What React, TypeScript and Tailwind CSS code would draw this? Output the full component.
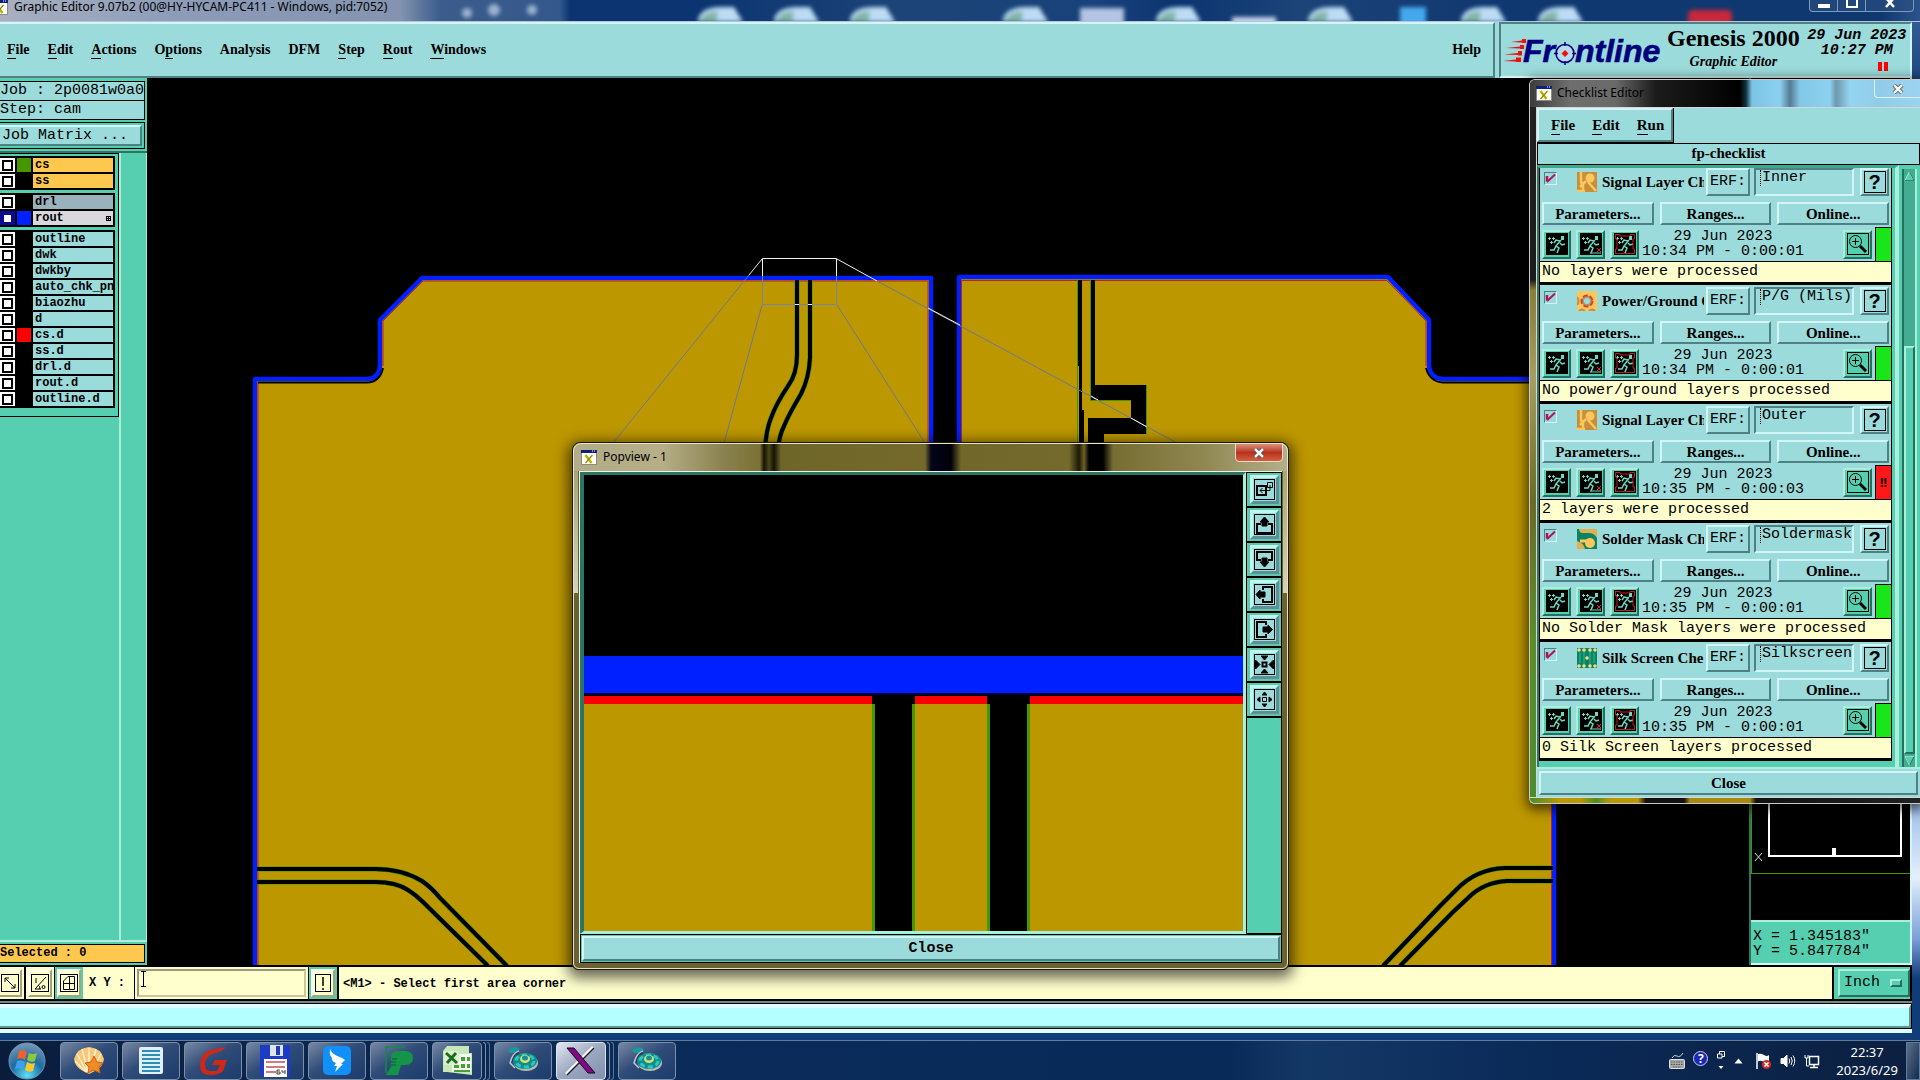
import type { ReactNode } from "react";
import clsx from "clsx";

const MONO = "font-['Liberation_Mono',monospace]";
const SERIF = "font-['Liberation_Serif',serif]";
const UI = "font-['Noto_Sans',sans-serif]";

// Motif bevels
const RAISED = "border-2 border-t-[#d4f5f5] border-l-[#d4f5f5] border-r-[#4f8083] border-b-[#4f8083]";
const SUNKEN = "border-2 border-t-[#4f8083] border-l-[#4f8083] border-r-[#d4f5f5] border-b-[#d4f5f5]";
const TEAL_RAISED = "border-2 border-t-[#a9efdc] border-l-[#a9efdc] border-r-[#23705c] border-b-[#23705c]";
const CREAM_RAISED = "border-2 border-t-[#fffff0] border-l-[#fffff0] border-r-[#a3a37e] border-b-[#a3a37e]";

type Layer = { name: string; color?: string; tone?: "orange" | "gray" | "light"; active?: boolean };

const layerGroups: Layer[][] = [
  [
    { name: "cs", color: "bg-[#459700]", tone: "orange" },
    { name: "ss", tone: "orange" },
  ],
  [
    { name: "drl", tone: "gray" },
    { name: "rout", color: "bg-[#0020ff]", tone: "light", active: true },
  ],
  [
    { name: "outline" },
    { name: "dwk" },
    { name: "dwkby" },
    { name: "auto_chk_pnl" },
    { name: "biaozhu" },
    { name: "d" },
    { name: "cs.d", color: "bg-[#ff0000]" },
    { name: "ss.d" },
    { name: "drl.d" },
    { name: "rout.d" },
    { name: "outline.d" },
  ],
];

const tones = {
  orange: "bg-[#fec74e]",
  gray: "bg-[#9ab2bc]",
  light: "bg-[#d9d9dd]",
};

// [text, index of the mnemonic letter, -1 for none]
const menus: [string, number][] = [
  ["File", 0],
  ["Edit", 0],
  ["Actions", 0],
  ["Options", 1],
  ["Analysis", -1],
  ["DFM", -1],
  ["Step", 0],
  ["Rout", 0],
  ["Windows", 0],
];

type Check = {
  title: string;
  icon: "signal" | "power" | "solder" | "silk";
  erf: string;
  time: string;
  status: string;
  failed?: boolean;
};

const checks: Check[] = [
  { title: "Signal Layer Ch", icon: "signal", erf: "Inner", time: "10:34 PM - 0:00:01", status: "No layers were processed" },
  { title: "Power/Ground C", icon: "power", erf: "P/G (Mils)", time: "10:34 PM - 0:00:01", status: "No power/ground layers processed" },
  { title: "Signal Layer Ch", icon: "signal", erf: "Outer", time: "10:35 PM - 0:00:03", status: "2 layers were processed", failed: true },
  { title: "Solder Mask Ch", icon: "solder", erf: "Soldermask", time: "10:35 PM - 0:00:01", status: "No Solder Mask layers were processed" },
  { title: "Silk Screen Che", icon: "silk", erf: "Silkscreen", time: "10:35 PM - 0:00:01", status: "0 Silk Screen layers processed" },
];

function Mnemonic({ text, at }: { text: string; at: number }) {
  if (at < 0) return <>{text}</>;
  return (
    <>
      {text.slice(0, at)}
      <span className="border-b border-black pb-px">{text[at]}</span>
      {text.slice(at + 1)}
    </>
  );
}

function XIcon() {
  return (
    <svg width="16" height="15" viewBox="0 0 16 15" className="shrink-0">
      <rect x="0.5" y="0.5" width="15" height="14" fill="#fffff4" stroke="#8a8a8a" />
      <rect x="0" y="0" width="16" height="3" fill="#10207a" />
      <path d="M11 1h1M13 1h1" stroke="#fff" />
      <path d="M4.5 5 L10.5 13" stroke="#b8b000" strokeWidth="2.4" />
      <path d="M11.5 5 L4.5 13" stroke="#8c8800" strokeWidth="1.2" />
    </svg>
  );
}

function FrontlineLogo() {
  return (
    <svg width="162" height="34" viewBox="0 0 162 34" aria-label="Frontline" className="overflow-visible">
      <g fill="#f01010">
        <path d="M8 6 L19 4.500 V3 H23 V7 H19 V6.500Z" />
        <path d="M3 12 L17 10.500 V9 H21 V13 H17 V12.500Z" />
        <path d="M1 18.500 L15 17 V15 H19 V19.500 H15 V19Z" />
        <path d="M0 25 L13 23.500 V21.500 H18 V26 H13 V25.500Z" />
      </g>
      <g
        fill="#00007c"
        stroke="#00007c"
        strokeWidth="0.600"
        fontFamily="'Liberation Sans', sans-serif"
        fontSize="32"
        fontWeight="bold"
        fontStyle="italic"
      >
        <text x="20" y="26">Fr</text>
        <text x="72" y="26">ntline</text>
      </g>
      <circle cx="62" cy="17.500" r="9" fill="#b4dcec" stroke="#00007c" strokeWidth="1.500" />
      <path d="M62 6v4M62 25v4M51 17.500h4M69 17.500h4" stroke="#00007c" strokeWidth="1.500" />
      <path d="M62 14 L65.500 17.500 L62 21 L58.500 17.500Z" fill="#f01010" />
    </svg>
  );
}

function MenuBar() {
  return (
    <header className={clsx("flex h-14 shrink-0 bg-[#9cdbdb] text-sm font-bold text-black", SERIF)}>
      <nav className={clsx("mr-1 flex flex-1 items-center justify-between border-l-0", RAISED)}>
        <div className="flex items-center gap-4 pl-1.5">
          {menus.map(([text, at]) => (
            <button key={text} className="px-px leading-4">
              <Mnemonic text={text} at={at} />
            </button>
          ))}
        </div>
        <button className="pr-3">Help</button>
      </nav>
      <div className={clsx("flex w-[413px] items-start pl-0.5", SUNKEN)}>
        <div className="pt-3">
          <FrontlineLogo />
        </div>
        <div className="ml-0.5 flex flex-col items-center">
          <h1 className="text-2xl leading-7 whitespace-nowrap">Genesis 2000</h1>
          <span className="text-sm italic">Graphic Editor</span>
        </div>
        <div className={clsx("flex flex-1 flex-col items-center pt-1 pl-1 text-[15px] leading-[15px] italic", MONO)}>
          <span className="whitespace-nowrap">29 Jun 2023</span>
          <span>10:27 PM</span>
          <span className="mt-1 flex gap-0.5 self-end pr-[22px]">
            <i className="h-[9px] w-1 bg-[#ff0000]" />
            <i className="h-[9px] w-1 bg-[#ff0000]" />
          </span>
        </div>
      </div>
    </header>
  );
}

function LayerRow({ layer }: { layer: Layer }) {
  return (
    <div className="flex h-3.5 gap-0.5">
      <label className={clsx("flex w-[15px] items-center justify-center", layer.active ? "bg-[#0a0a96]" : "bg-white")}>
        <input
          type="checkbox"
          aria-label={layer.name}
          className={clsx("size-[11px] appearance-none bg-white", layer.active ? "border-2 border-[#0a0a96]" : "border-2 border-black")}
        />
      </label>
      <span className={clsx("w-3.5", layer.color ?? "bg-black")} />
      <button
        className={clsx(
          "flex flex-1 items-center justify-between overflow-hidden pl-0.5 text-left text-xs leading-[14px] font-bold",
          layer.tone ? tones[layer.tone] : "bg-[#9cdbdb]",
        )}
      >
        {layer.name}
        {layer.active && (
          <svg width="5" height="5" viewBox="0 0 5 5" className="mr-0.5">
            <path d="M0 .5h5M0 2.500h5M0 4.500h5M.5 0v5M2.500 0v5M4.500 0v5" stroke="#000" />
          </svg>
        )}
      </button>
    </div>
  );
}

function Sidebar() {
  return (
    <aside className={clsx("flex w-[147px] shrink-0 flex-col bg-[#55cfb0] pt-[3px] text-black", MONO)}>
      <div className="mr-0.5 border border-l-0 border-black bg-[#9cdbdb] text-[15px] leading-[18px] whitespace-nowrap">
        Job : 2p0081w0a0
      </div>
      <div className="mr-0.5 border border-t-0 border-l-0 border-black bg-[#9cdbdb] text-[15px] leading-[18px]">Step: cam</div>
      <div className="mt-0.5 mr-0.5 border border-l-0 border-black py-0.5 pr-0.5">
        <button className={clsx("block w-full border-l-0 bg-[#9cdbdb] pl-0.5 text-left text-[15px] leading-[17px]", RAISED)}>
          Job Matrix ...
        </button>
      </div>
      <div className="mt-0.5 flex flex-1 border-t-2 border-[#2c7464]">
        <div className="w-[119px]">
          <div className="flex flex-col gap-[3px] border-t border-r border-black pt-0.5 pr-[3px] pb-2">
            {layerGroups.map((group, i) => (
              <div key={i} className="flex flex-col gap-0.5 bg-black py-0.5 pr-0.5">
                {group.map((layer) => (
                  <LayerRow key={layer.name} layer={layer} />
                ))}
              </div>
            ))}
          </div>
          <div className="border-t border-black" />
        </div>
        <div className="flex-1 border-r border-l-2 border-[#a9efdc]" />
      </div>
      <div className="border-t-2 border-[#a9efdc] pt-0.5 pr-0.5 pb-0.5">
        <div className="border border-l-0 border-black bg-[#fec74e] text-xs leading-[17px] font-bold">Selected : 0</div>
      </div>
    </aside>
  );
}

const leftBoard = "M255 966 V379 H366 Q380 379 380 364 V320 L422 278 H931 V966";
const rightBoard = "M959 966 V277 H1388 L1429 320 V364 Q1429 378 1443 379 H1554 V966";

const traces = [
  "M797 280 V355 Q797 374 788 386 Q776 404 771 418 Q766 430 765 450",
  "M810 280 V358 Q809 378 801 394 Q789 414 784 426 Q779 436 778 450",
  "M257 869 H375 Q402 869 422 881 Q432 888 440 898 L507 966",
  "M257 882 H375 Q396 882 408 890 Q416 895 423 902 L488 966",
  "M1553 868 H1505 Q1476 869 1456 890 L1440 906 L1383 966",
  "M1553 881 H1507 Q1484 882 1468 898 L1452 913 L1400 966",
];

function Board() {
  return (
    <main className="min-w-0 flex-1 overflow-hidden bg-black">
      <svg className="block h-full w-full" viewBox="147 78 1602 887" preserveAspectRatio="xMinYMin slice">
        <g fill="#bd9700" stroke="#0020ff" strokeWidth="4.500" strokeLinejoin="round">
          <path d={leftBoard} />
          <path d={rightBoard} />
        </g>
        <g fill="none" stroke="#c02020" strokeWidth="1">
          <path d="M258 966 V382 M383 366 V321 L423 281 H928 V966" />
          <path d="M961.500 966 V280.500 H1387 L1426 321 V366 M1551.500 382 V966" />
        </g>
        <g fill="none">
          <path d="M258 382.500 H367 Q380 382 383 368" stroke="#000" strokeWidth="2" />
          <path d="M1551 382.500 H1443 Q1430 382 1426 368" stroke="#000" strokeWidth="2" />
        </g>
        <g fill="none">
          {traces.map((d) => (
            <g key={d}>
              <path d={d} stroke="#459700" strokeWidth="5" />
              <path d={d} stroke="#000" strokeWidth="4" />
            </g>
          ))}
        </g>
        <g shapeRendering="crispEdges">
          <path d="M1078 280 H1082 V410 H1084 V450 H1079Z" />
          <path d="M1091 280 H1095 V385 H1146 V434 H1104 V450 H1088 V418 H1131 V400 H1091Z" />
          <path d="M1077.500 280 V450 M1090.500 280 V400.500 H1131 M1146.500 385 V434" fill="none" stroke="#459700" />
        </g>
        {/* zoom guides, lighter where they cross bare background */}
        <g fill="none" strokeWidth="1">
          <path d="M762.500 276 V304.500 H836.500 V276" stroke="#7484ac" />
          <path d="M762.500 276 V258.500 H836.500 V276 M795 304.500 H799 M808 304.500 H812" stroke="#f0f0f0" />
          <path d="M749 275 L613 443 M762 305 L724 443 M837 305 L925 443 M877 281 L1177 443" stroke="#6c7894" />
          <path d="M762 259 L749 275 M837 259 L877 281 M928 308 L960 325 M1091 396 L1098 400 M1131 418 L1147 427" stroke="#f0f0f0" />
        </g>
      </svg>
    </main>
  );
}

function Overview() {
  return (
    <aside className={clsx("flex w-[163px] shrink-0 flex-col border-r-2 border-l-2 border-r-[#d4f5f5] border-l-[#2c7464] bg-black", MONO)}>
      <div className="flex flex-1 items-end">
        <svg width="159" height="200" viewBox="1751 720 159 200" fill="none" shapeRendering="crispEdges">
          <path d="M1751.500 720 V873.500 H1910" stroke="#459700" />
          <path d="M1768.500 720 V856 H1901 V720" stroke="#fff" strokeWidth="2" />
          <path d="M1834 848 V857" stroke="#fff" strokeWidth="4" />
          <path d="M1755 853 L1762 861 M1762 853 L1755 861" stroke="#ddd" shapeRendering="auto" />
        </svg>
      </div>
      <div className="border-y-2 border-t-[#a9efdc] border-b-[#d4f5f5] bg-[#55cfb0] pt-[7px] pb-1 pl-0.5 text-[15px] leading-[15px] whitespace-pre text-black">
        <div>X = 1.345183"</div>
        <div>Y = 5.847784"</div>
      </div>
    </aside>
  );
}

function CreamButton({ label, teal, children }: { label: string; teal?: boolean; children: ReactNode }) {
  return (
    <button
      aria-label={label}
      className={clsx("flex h-8 w-7 shrink-0 items-center justify-center", teal ? "bg-[#55cfb0]" : "bg-[#ffffce]")}
    >
      <span className={clsx("flex h-7 w-6 items-center justify-center bg-[#ffffce]", CREAM_RAISED)}>
        <svg width="18" height="20" viewBox="0 0 18 20" fill="none" stroke="#000">
          {children}
        </svg>
      </span>
    </button>
  );
}

function CommandBar() {
  return (
    <div className={clsx("flex h-9 shrink-0 border-y-2 border-black bg-[#ffffce] text-xs font-bold text-black", MONO)}>
      <div className="flex items-center">
        <div className="-ml-1 flex items-center border-r border-black">
          <CreamButton label="Snap mode">
            <rect x="0.500" y="1.500" width="17" height="17" />
            <path d="M4 5 L14 15 M4 9 V5 H8 M10 15 H14 V11" />
          </CreamButton>
          <span className="h-8 w-0.5 bg-black" />
          <CreamButton label="Angle">
            <rect x="0.500" y="1.500" width="17" height="17" />
            <path d="M15 4 L4 16 H10 M5 5 V10 M7 12 Q9 13 9 16" />
            <circle cx="12.500" cy="14" r="1.500" />
          </CreamButton>
        </div>
        <CreamButton label="Grid" teal>
          <rect x="0.500" y="1.500" width="17" height="17" />
          <path d="M3.500 16.500 V8 L8 3.500 H14.500 V16.500Z M9.500 3.500 V16.500 M3.500 10.500 H14.500" />
        </CreamButton>
      </div>
      <label htmlFor="xy" className="flex w-[52px] shrink-0 items-center border-r border-black pl-1.5 whitespace-pre">
        X Y :
      </label>
      <div className="flex w-[174px] shrink-0 items-center border-r border-black px-0.5">
        <div className="flex h-7 w-full border-2 border-t-[#9a9a7c] border-r-[#c9c9a0] border-b-[#c9c9a0] border-l-[#9a9a7c] pl-0.5">
          <svg width="5" height="16" viewBox="0 0 5 16" className="shrink-0" stroke="#000">
            <path d="M0 .5h5M0 15.500h5M2.500 0v16" />
          </svg>
          <input id="xy" className="w-full bg-transparent outline-none" />
        </div>
      </div>
      <CreamButton label="Help on command" teal>
        <rect x="1.500" y="1.500" width="15" height="17" />
        <path d="M9 4 V13 M9 15 V17" strokeWidth="1.500" />
      </CreamButton>
      <p className="flex flex-1 items-center border-l-2 border-black pt-px pl-1 whitespace-nowrap">{"<M1> - Select first area corner"}</p>
      <div className="flex w-20 items-center border-x-2 border-black bg-[#55cfb0] pl-1">
        <div className={clsx("relative flex h-7 flex-1 items-center", TEAL_RAISED)}>
          <select aria-label="Units" className="w-full appearance-none bg-transparent pl-1 text-[15px] font-normal outline-none">
            <option>Inch</option>
            <option>mm</option>
          </select>
          <span className="pointer-events-none absolute right-1.5 h-2 w-3 border-2 border-t-[#a9efdc] border-r-[#23705c] border-b-[#23705c] border-l-[#a9efdc]" />
        </div>
      </div>
    </div>
  );
}

const popIcons: { label: string; body: ReactNode }[] = [
  {
    label: "Area",
    body: (
      <>
        <path d="M3 7h9v9h-9z" strokeWidth="2" />
        <path d="M13.500 3.500h5v5h-5zM16 6v5.500H6M8.500 9L6 11.500L8.500 14" />
      </>
    ),
  },
  {
    label: "Up",
    body: (
      <>
        <path d="M7 10H3v9h15v-9h-4" strokeWidth="2" />
        <path d="M10.500 3L15 8h-2v4h-5V8H6Z" fill="#000" />
      </>
    ),
  },
  {
    label: "Down",
    body: (
      <>
        <path d="M7 11H3V3h15v8h-4" strokeWidth="2" />
        <path d="M10.500 18L15 13h-2V9h-5v4H6Z" fill="#000" />
      </>
    ),
  },
  {
    label: "Left",
    body: (
      <>
        <path d="M9 6V3h9v15H9v-3" strokeWidth="2" />
        <path d="M2 10.500L6 6v2h5v5H6v2Z" fill="#000" />
      </>
    ),
  },
  {
    label: "Right",
    body: (
      <>
        <path d="M12 6V3H3v15h9v-3" strokeWidth="2" />
        <path d="M18.500 10.500L14 6v2H9v5h5v2Z" fill="#000" />
      </>
    ),
  },
  {
    label: "Zoom in",
    body: (
      <>
        <path d="M8.500 8.500h4v4h-4z" strokeWidth="2" />
        <path d="M7 2h7L10.500 6ZM7 19h7L10.500 15ZM1.500 6v9L6 10.500ZM19.500 6v9L15 10.500Z" fill="#000" />
      </>
    ),
  },
  {
    label: "Zoom out",
    body: (
      <>
        <path d="M8.500 8.500h4v4h-4z" />
        <path d="M8 6h5L10.500 3ZM8 15h5L10.500 18ZM6 8v5L3 10.500ZM15 8v5L18 10.500Z" fill="#000" />
      </>
    ),
  },
];

function Popview() {
  return (
    <section className="absolute top-[442px] left-[572px] flex h-[528px] w-[717px] flex-col rounded-t-lg rounded-b-md border border-[#1c1a08] bg-[#6b6230] px-1.5 pb-1.5 shadow-[0_4px_14px_4px_rgba(0,0,0,0.6)]">
      <div className="pointer-events-none absolute inset-0 rounded-t-lg rounded-b-md border border-[#e8e4c8]" />
      <div className="pointer-events-none absolute inset-y-7 left-px h-[122px] w-1 bg-linear-to-b from-[#aaa376] to-[#d5d1ba]" />
      <div className="pointer-events-none absolute inset-y-7 right-px h-[122px] w-1 bg-linear-to-b from-[#aaa376] to-[#d5d1ba]" />
      <div className="-mx-1.5 flex h-7 shrink-0 items-center rounded-t-lg bg-[linear-gradient(90deg,#b2ac88_0,#b5ae86_90px,#8a8250_150px,#7b7134_187px,#141204_191px,#4c4618_196px,#141204_201px,#6e6628_208px,#74692b_352px,#05051c_358px,#000008_378px,#71672a_388px,#736a2c_496px,#1c1a06_506px,#6c6228_511px,#000_516px,#000_530px,#766d32_540px,#8f8750_630px,#b5af8c_100%)] pr-[5px] pl-2">
        <XIcon />
        <h2 className={clsx("pl-1.5 text-xs text-black", UI)}>Popview - 1</h2>
        <button
          aria-label="Close Popview"
          className="z-10 mb-auto ml-auto flex h-[19px] w-12 items-center justify-center rounded-b-sm border border-[#f0d8cc] bg-linear-to-b from-[#d8907c] via-[#b8301c] via-50% to-[#d06040]"
        >
          <CloseGlyph />
        </button>
      </div>
      <div className="flex min-h-0 flex-1 flex-col border-t border-l border-[#e8f4e8] bg-[#55cfb0]">
        <div className="flex min-h-0 flex-1">
          <div className="min-w-0 flex-1 border-t-[3px] border-r-[3px] border-b-[3px] border-l-4 border-t-[#2c7464] border-r-[#a9efdc] border-b-[#a9efdc] border-l-[#2c7464]">
            <svg className="block h-full w-full bg-black" viewBox="0 0 657 456" preserveAspectRatio="none" shapeRendering="crispEdges">
              <rect y="181" width="657" height="37" fill="#0020ff" />
              <rect y="218" width="657" height="2" fill="#000040" />
              <path d="M0 221h287v8h-287zM330 221h72v8h-72zM445 221h212v8h-212z" fill="#ff0000" />
              <path d="M0 229h287v227h-287zM330 229h72v227h-72zM445 229h212v227h-212z" fill="#bd9700" />
              <path d="M287 229h3v227h-3zM327 229h3v227h-3zM402 229h3v227h-3zM442 229h3v227h-3z" fill="#459700" />
            </svg>
          </div>
          <div className="w-9 border border-black">
            {popIcons.map((icon) => (
              <button key={icon.label} aria-label={icon.label} className="flex h-[35px] w-full items-center justify-center border-b-2 border-black bg-[#62c6ad]">
                <span className="flex size-[29px] items-center justify-center border-3 border-t-[#bdf8ee] border-r-[#5d8f98] border-b-[#5d8f98] border-l-[#bdf8ee] bg-[#9cdbdb]">
                  <svg width="21" height="21" viewBox="0 0 21 21" fill="none" stroke="#000">
                    <rect x="0.500" y="0.500" width="20" height="20" />
                    {icon.body}
                  </svg>
                </span>
              </button>
            ))}
          </div>
        </div>
        <div className="border border-black p-px">
          <button className={clsx("block h-[25px] w-full bg-[#9cdbdb] text-[15px] leading-[22px] font-bold text-black", RAISED, MONO)}>
            Close
          </button>
        </div>
      </div>
    </section>
  );
}

function CloseGlyph() {
  return (
    <svg width="12" height="10" viewBox="0 0 12 10">
      <path d="M2 1 L10 9 M10 1 L2 9" stroke="#444" strokeWidth="4" />
      <path d="M2 1 L10 9 M10 1 L2 9" stroke="#f4f4f4" strokeWidth="2.500" />
    </svg>
  );
}

function CheckIcon({ kind }: { kind: Check["icon"] }) {
  return (
    <svg width="20" height="20" viewBox="0 0 20 20" className="shrink-0">
      {kind === "signal" && (
        <>
          <rect width="20" height="20" fill="#c58f3c" />
          <circle cx="13" cy="6" r="4.500" fill="#ffc65c" />
          <path d="M4 0V8Q4 12 6 13V20M9 9L3 15M11 10L19 19M0 19H8" stroke="#ffc65c" strokeWidth="2.500" fill="none" />
        </>
      )}
      {kind === "power" && (
        <>
          <rect width="20" height="20" fill="#ffc65c" />
          <circle cx="10" cy="10" r="5.500" fill="#a89878" stroke="#e04020" strokeWidth="2" strokeDasharray="5 2" />
          <circle cx="10" cy="10" r="3" fill="#9cdbdb" />
          <path d="M0 6Q3 10 0 14M2 20Q5 17 8 20M12 20Q15 17 18 20" stroke="#c58f3c" strokeWidth="2" fill="none" />
        </>
      )}
      {kind === "solder" && (
        <>
          <rect width="20" height="20" fill="#0c8464" />
          <path d="M2 0H20V9Q17 4 12 4H5Q2 3 2 0Z" fill="#e0b050" />
          <path d="M0 12Q7 14 8 20H0Z" fill="#e0b050" />
          <circle cx="13" cy="14" r="5" fill="#ffc65c" />
          <path d="M3 12H11" stroke="#ffc65c" strokeWidth="3" />
        </>
      )}
      {kind === "silk" && (
        <>
          <rect width="20" height="20" fill="#0c8464" />
          <path d="M3 5V15M17 5V15M7 3V17M13 3V17" stroke="#30b890" />
          <g fill="#f4dc84">
            <circle cx="2" cy="2" r="1.800" />
            <circle cx="7" cy="2" r="1.800" />
            <circle cx="13" cy="2" r="1.800" />
            <circle cx="18" cy="2" r="1.800" />
            <circle cx="2" cy="18" r="1.800" />
            <circle cx="7" cy="18" r="1.800" />
            <circle cx="13" cy="18" r="1.800" />
            <circle cx="18" cy="18" r="1.800" />
            <circle cx="10" cy="10" r="1.800" />
          </g>
        </>
      )}
    </svg>
  );
}

function RunButton({ label, variant }: { label: string; variant: "run" | "area" | "profile" }) {
  return (
    <button aria-label={label} className={clsx("flex size-[29px] shrink-0 items-center justify-center bg-[#55cfb0]", TEAL_RAISED)}>
      <svg width="22" height="22" viewBox="0 0 22 22" className="bg-black" fill="none" stroke="#6fd8c0" strokeWidth="1.500">
        <path d="M15 3h3v4h-3z" fill="#6fd8c0" stroke="none" />
        <path d="M15 7L10 13L13 15L11 20M10 13L8 17H4M14 8L10 7L8 10M14 10L16 12L19 11" />
        <path d="M2 5.500h3M3.500 4v3M6 5.500h3M7.500 4v3M4 9.500h3M5.500 8v3" strokeWidth="1" />
        {variant === "area" && (
          <>
            <path d="M10 20H21" strokeWidth="1" />
            <path d="M17 15L21 19M21 15L17 19" stroke="#e02030" strokeWidth="1" />
          </>
        )}
        {variant === "profile" && <path d="M1.500 1.500H6V3H16V1.500H20.500V6H19V16H20.500V20.500H1.500V16H3V6H1.500Z" stroke="#c81820" strokeWidth="1" />}
      </svg>
    </button>
  );
}

function CheckCard({ check, id, first }: { check: Check; id: string; first: boolean }) {
  return (
    <li className="border-x border-b-[3px] border-black bg-[#9cdbdb]">
      <div className={clsx("flex items-stretch pr-0.5 pl-1", first ? "h-7" : "h-[30px] pt-0.5")}>
        <span className="mt-1 grid size-[13px] shrink-0 place-items-center">
          <input
            id={id}
            type="checkbox"
            defaultChecked
            className="peer col-start-1 row-start-1 size-[13px] appearance-none border border-t-[#4f8083] border-r-[#d4f5f5] border-b-[#d4f5f5] border-l-[#4f8083]"
          />
          <svg width="11" height="11" viewBox="0 0 11 11" fill="none" className="pointer-events-none invisible col-start-1 row-start-1 peer-checked:visible">
            <path d="M2 3V8.500" stroke="#b0145c" strokeWidth="2.500" />
            <path d="M2 9L10 1.500" stroke="#b0145c" strokeWidth="2" />
          </svg>
        </span>
        <label htmlFor={id} className={clsx("ml-5 flex w-[127px] shrink-0 items-center gap-[5px] overflow-hidden text-[15px] leading-5 font-bold whitespace-nowrap", SERIF)}>
          <CheckIcon kind={check.icon} />
          {check.title}
        </label>
        <button className={clsx("ml-0.5 w-11 shrink-0 pl-0.5 text-left text-[15px]", RAISED, MONO)}>ERF:</button>
        <div className={clsx("ml-1 flex min-w-0 flex-1 items-start", SUNKEN)}>
          <span className="ml-1 h-4 w-0 shrink-0 border-l border-dotted border-black" />
          <input
            aria-label={`${check.title} ERF`}
            defaultValue={check.erf}
            className={clsx("w-full min-w-0 bg-transparent pl-px text-[15px] leading-4 outline-none", MONO)}
          />
        </div>
        <button aria-label="Help" className={clsx("ml-1.5 flex w-[29px] shrink-0 items-center justify-center", RAISED)}>
          <span className="flex size-[22px] items-center justify-center border border-black font-['Liberation_Sans',sans-serif] text-xl leading-5 font-bold">?</span>
        </button>
      </div>
      <div className={clsx("mt-1.5 flex gap-1.5 pr-0.5 pl-0.5 text-[15px] leading-[18px] font-bold", SERIF)}>
        <button className={clsx("h-[23px] flex-1", RAISED)}>Parameters...</button>
        <button className={clsx("h-[23px] flex-1", RAISED)}>Ranges...</button>
        <button className={clsx("h-[23px] flex-1", RAISED)}>Online...</button>
      </div>
      <div className="mt-0.5 flex h-[34px] items-center gap-[5px] pl-0.5">
        <RunButton label="Run globally" variant="run" />
        <RunButton label="Run on area" variant="area" />
        <RunButton label="Run inside profile" variant="profile" />
        <p className={clsx("-ml-0.5 text-center text-[15px] leading-[15px] whitespace-nowrap", MONO)}>
          29 Jun 2023
          <br />
          {check.time}
        </p>
        <button aria-label="Show results" className={clsx("ml-auto flex size-[29px] shrink-0 items-center justify-center bg-[#55cfb0]", TEAL_RAISED)}>
          <svg width="22" height="22" viewBox="0 0 22 22" fill="none" stroke="#000">
            <rect x="0.500" y="0.500" width="21" height="21" />
            <circle cx="8.500" cy="8.500" r="6" />
            <path d="M8.500 5v7M5 8.500h7" />
            <path d="M13 13L19 19" strokeWidth="3" />
          </svg>
        </button>
        <span
          className={clsx(
            "-ml-0.5 flex h-[34px] w-4 items-center justify-center border-t border-l border-black text-xs font-bold",
            check.failed ? "bg-[#ff1818]" : "bg-[#18e618]",
          )}
        >
          {check.failed && "!!"}
        </span>
      </div>
      <p className={clsx("h-[21px] border-t border-black bg-[#ffffce] pl-0.5 text-[15px] leading-5 whitespace-nowrap", MONO)}>{check.status}</p>
    </li>
  );
}

function ChecklistEditor() {
  return (
    <section className="absolute top-[79px] right-0 flex h-[725px] w-[391px] flex-col overflow-hidden rounded-tl-md rounded-bl-md border border-r-0 border-[#c8ccc8] bg-[linear-gradient(180deg,#222_0,#1c1c1c_200px,#8a7c38_210px,#a89c60_300px,#6b6a28_420px,#5c8c2c_560px,#4c8c2c_100%)] pl-1.5 text-black shadow-[0_3px_12px_3px_rgba(0,0,0,0.6)]">
      <div className="-ml-1.5 flex h-[27px] shrink-0 items-start bg-[linear-gradient(90deg,#3c3c3c_0,#6e6e6e_40px,#6a6a6a_85px,#1c1c1c_125px,#000_210px,#103440_216px,#7cc4e4_222px,#8cd0f0_250px,#547c94_260px,#84c8e8_270px,#8cd0f0_300px,#6c98ac_306px,#94d4f0_320px,#90cce8_350px,#9cd4f0_100%)] pl-1.5">
        <div className="flex h-[26px] items-center">
          <XIcon />
          <h2 className={clsx("pl-[5px] text-xs", UI)}>Checklist Editor</h2>
        </div>
        <button aria-label="Close Checklist Editor" className="ml-auto flex h-[18px] w-[46px] items-center justify-center rounded-bl-sm border border-t-0 border-r-0 border-[#e0f0f8]">
          <CloseGlyph />
        </button>
      </div>
      <div className="flex min-h-0 flex-1 flex-col border-t border-l border-[#d0d8d8] bg-[#9cdbdb]">
        <div className={clsx("w-[137px] border-r border-b border-black text-[15px] font-bold", SERIF)}>
          <div className={clsx("flex h-[34px] items-center gap-[17px] pl-3", RAISED)}>
            {["File", "Edit", "Run"].map((m) => (
              <button key={m} className="leading-4">
                <Mnemonic text={m} at={0} />
              </button>
            ))}
          </div>
        </div>
        <h3 className={clsx("h-[22px] border border-black text-center text-[15px] leading-[19px] font-bold", SERIF)}>fp-checklist</h3>
        <div className="flex min-h-0 flex-1 bg-[#55cfb0]">
          <div className="w-[363px] border-t-[3px] border-r-4 border-l-2 border-t-[#3ba98d] border-r-[#a9efdc] border-l-[#2c7464]">
            <ul className="mr-[3px]">
              {checks.map((check, i) => (
                <CheckCard key={i} check={check} id={`check-${i}`} first={i === 0} />
              ))}
            </ul>
          </div>
          <div className="flex flex-1 flex-col px-[3px] pt-1">
            <div className="flex min-h-0 flex-1 flex-col items-center border-x-2 border-l-[#23705c] border-r-[#a9efdc] bg-[#45ac94]">
              <button aria-label="Scroll up" className="h-[13px]">
                <svg width="11" height="12" viewBox="0 0 12 12">
                  <path d="M6 1L11 11H1Z" fill="#55cfb0" stroke="#a9efdc" />
                  <path d="M6 1L11 11H1" fill="none" stroke="#23705c" />
                </svg>
              </button>
              <div className="h-[164px]" />
              <div className={clsx("min-h-0 w-full flex-1 bg-[#55cfb0]", TEAL_RAISED)} />
              <button aria-label="Scroll down" className="h-[13px]">
                <svg width="11" height="12" viewBox="0 0 12 12">
                  <path d="M6 11L11 1H1Z" fill="#55cfb0" stroke="#23705c" />
                  <path d="M6 11L1 1H11" fill="none" stroke="#a9efdc" />
                </svg>
              </button>
            </div>
          </div>
        </div>
        <div className="border-t-2 border-[#a9efdc] p-0.5">
          <button className={clsx("block h-6 w-full bg-[#9cdbdb] text-[15px] leading-5 font-bold", RAISED, SERIF)}>Close</button>
        </div>
      </div>
      <div className="-ml-1.5 h-1.5 shrink-0 border-t border-[#d0d8d8] bg-[linear-gradient(90deg,#4c8c2c_0,#bd9700_30px,#bd9700_50px,#4c8c2c_66px,#bd9700_80px,#bd9700_108px,#111_116px,#111_154px,#a88a10_160px,#a88a10_220px,#111_226px,#222_100%)]" />
    </section>
  );
}

const taskIcons: { label: string; active?: boolean; stacked?: boolean; icon: ReactNode }[] = [
  {
    label: "Shell",
    icon: (
      <>
        <path d="M16 29L10 26Q2 22 1 14Q4 3 16 2Q28 3 31 14Q30 22 22 26Z" fill="#f7c878" />
        <path d="M16 28V3M15 27L9 4M17 27L23 4M14 27L4 9M18 27L28 9M13 27L2 16" stroke="#fff0c8" strokeWidth="1.500" />
        <path d="M21 11L24 17L30 18L26 22L27 28L21 25L15 28L16 22L12 18L18 17Z" fill="#f08a24" stroke="#c8601c" />
      </>
    ),
  },
  {
    label: "Documents",
    icon: (
      <>
        <rect x="4" y="2" width="24" height="27" rx="2" fill="#dff0f8" />
        <path d="M7 6H25M7 10H25M7 14H25M7 18H25M7 22H25M7 26H25" stroke="#2c8cb4" strokeWidth="1.800" />
      </>
    ),
  },
  {
    label: "G",
    icon: <path d="M29 2Q25 7 15 9Q8 12 8 20Q8 26 14 26H20L23 20H15L18 15H30L26 26Q22 30 14 30Q3 30 3 21Q3 9 13 5Q20 4 29 2Z" fill="#d02818" />,
  },
  {
    label: "Save",
    icon: (
      <>
        <path d="M1 0H31V32H4L1 29Z" fill="#1c3cc4" />
        <rect x="11" y="0" width="13" height="11" fill="#e0e4ec" />
        <rect x="17" y="1" width="4" height="9" fill="#1c3cc4" />
        <rect x="5" y="14" width="23" height="18" fill="#fff" />
        <path d="M7 17H26M7 22H26M7 27H17" stroke="#c05050" strokeWidth="1.500" />
        <path d="M21 25H18V29H21V27H18M23 25V27H26M26 25V29" stroke="#444" fill="none" />
      </>
    ),
  },
  {
    label: "DingTalk",
    icon: (
      <>
        <rect x="2" y="1" width="28" height="29" rx="5" fill="#1090f8" />
        <path d="M9 4Q10 9 21 13L24 15L20 19H22L14 27L16 21H13L15 18Q10 16 11 13Q8 10 9 4Z" fill="#fff" />
      </>
    ),
  },
  {
    label: "P",
    icon: (
      <>
        <path d="M3 28V2H22" stroke="#148c44" strokeWidth="1.500" fill="none" />
        <path d="M8 12Q8 6 15 6H22Q30 6 30 13Q30 20 22 20H18L15 30H3L8 22Z" fill="#149448" />
        <path d="M9 14H14M8 17H13M8 20H13" stroke="#0c5a34" />
      </>
    ),
  },
  {
    label: "Excel",
    stacked: true,
    icon: (
      <>
        <path d="M6 1H28V8H31V30L6 27H2V6Z" fill="#c8e8b8" />
        <rect x="11" y="9" width="19" height="18" fill="#f4fcf0" />
        <path d="M13 19H18V23H13ZM20 19H24V23H20ZM20 12H24V16H20ZM26 12H29V16H26ZM26 19H29V23H26ZM13 25H29V27H13Z" fill="#4c9c3c" />
        <rect x="3" y="6" width="15" height="14" fill="#d8f0cc" />
        <path d="M5 8L16 18M15 8L6 18" stroke="#1c6c24" strokeWidth="3" />
      </>
    ),
  },
  { label: "Genesis tools", icon: <DiscIcon /> },
  {
    label: "X server",
    active: true,
    stacked: true,
    icon: (
      <>
        <path d="M28 2L1 29" stroke="#f4f4f4" strokeWidth="3" />
        <path d="M29 3L2 30" stroke="#222" strokeWidth="1.500" />
        <path d="M2 3H9L30 28H23Z" fill="#800c84" stroke="#1c041c" />
      </>
    ),
  },
  { label: "Genesis", icon: <DiscIcon /> },
];

function DiscIcon() {
  return (
    <>
      <path d="M1 5Q7 0 13 4L9 8H3Z" fill="#149c9c" />
      <path d="M12 6Q5 9 3 18L8 23" stroke="#c4c4d4" strokeWidth="1.500" fill="none" />
      <path d="M12 8Q7 10 6 17" stroke="#383450" strokeWidth="2.500" fill="none" />
      <ellipse cx="19" cy="18" rx="12" ry="8" fill="#b4bcb0" />
      <ellipse cx="18" cy="16" rx="12" ry="8" fill="#108c90" />
      <ellipse cx="18" cy="16" rx="9" ry="6" fill="none" stroke="#2cc8bc" strokeDasharray="5 3" strokeWidth="3" />
      <ellipse cx="18" cy="14" rx="5" ry="4" fill="#d8e06c" />
      <ellipse cx="18" cy="13" rx="3" ry="2.500" fill="#14909c" />
    </>
  );
}

function StartOrb() {
  return (
    <svg width="40" height="38" viewBox="0 0 40 38">
      <defs>
        <radialGradient id="orb" cx="0.500" cy="0.900" r="0.900">
          <stop offset="0" stopColor="#5ce0f8" />
          <stop offset="0.500" stopColor="#1c6ca4" />
          <stop offset="1" stopColor="#7c98b4" />
        </radialGradient>
      </defs>
      <circle cx="20" cy="19" r="18" fill="url(#orb)" stroke="#6c94b4" />
      <path d="M12 9Q16 7 20 10L18 18Q14 15 10 17Z" fill="#f0602c" />
      <path d="M22 11Q26 13 30 11L28 19Q24 21 20 18Z" fill="#8cc83c" />
      <path d="M10 19Q14 17 18 20L16 28Q12 25 8 27Z" fill="#3ca0ec" />
      <path d="M20 20Q24 23 28 21L26 29Q22 31 18 28Z" fill="#fcc82c" />
    </svg>
  );
}

function Taskbar() {
  return (
    <footer className={clsx("flex h-10 shrink-0 items-center border-t border-[#5c7c9c] bg-[linear-gradient(90deg,#0a1c3c_0,#0c2448_12%,#0b2c5a_36%,#082a58_64%,#143866_68%,#0a2a58_80%,#0c2040_100%)] text-white", UI)}>
      <button aria-label="Start" className="ml-[7px]">
        <StartOrb />
      </button>
      <div className="ml-[13px] flex gap-1">
        {taskIcons.map((t) => (
          <div key={t.label} className="flex w-[58px] gap-px">
            <button
              aria-label={t.label}
              className={clsx(
                "flex h-[38px] flex-1 items-center justify-center rounded-sm border",
                t.active
                  ? "border-[#dce4f0] bg-linear-to-br from-[#e4e8f0] via-[#9ca8c0] to-[#8090b0]"
                  : "border-[#7c90ac] bg-linear-to-br from-[#7888a4] via-[#304c78] via-45% to-[#1c3c6c]",
              )}
            >
              <svg width="32" height="32" viewBox="0 0 32 32" fill="none">
                {t.icon}
              </svg>
            </button>
            {t.stacked && (
              <>
                <i className="w-[3px] rounded-r-sm border-y border-r border-[#7c90ac]" />
                <i className="w-[3px] rounded-r-sm border-y border-r border-[#5c7498]" />
              </>
            )}
          </div>
        ))}
      </div>
      <div className="ml-auto flex items-center gap-2">
        <svg width="16" height="18" viewBox="0 0 16 18" fill="none">
          <path d="M3 6Q5 2 8 4T14 1" stroke="#ccc" />
          <rect x="0.500" y="7.500" width="15" height="9" rx="1" fill="#a8a8a8" stroke="#ddd" />
          <path d="M2 10H14M2 12.500H14M4 15H12" stroke="#555" strokeDasharray="1.500 1" />
        </svg>
        <span className="mb-1 flex size-[15px] items-center justify-center rounded-full border border-[#c8ccf0] bg-[#1c28b4] text-xs leading-3 font-bold">?</span>
        <svg width="10" height="22" viewBox="0 0 10 22" fill="none" stroke="#fff">
          <path d="M3.500 4V1.500H8.500V6.500H6M1.500 4H6V8H1.500Z" />
          <path d="M2.500 16H7.500L5 19Z" fill="#fff" stroke="none" />
        </svg>
        <svg width="9" height="6" viewBox="0 0 9 6">
          <path d="M0.500 5.500L4.500 0.500L8.500 5.500Z" fill="#fff" />
        </svg>
        <svg width="17" height="18" viewBox="0 0 17 18" fill="none" className="ml-1">
          <path d="M2 1V17" stroke="#fff" strokeWidth="1.500" />
          <path d="M3 2Q6 1 9 3T14 3V10Q11 11 8 9.500T3 9.500Z" fill="#fff" />
          <circle cx="11.500" cy="12.500" r="4.500" fill="#d42c24" />
          <path d="M9.500 10.500L13.500 14.500M13.500 10.500L9.500 14.500" stroke="#fff" strokeWidth="1.500" />
        </svg>
        <svg width="16" height="16" viewBox="0 0 16 16" fill="none" stroke="#fff">
          <path d="M1 5.500H3.500L7 2V14L3.500 10.500H1Z" fill="#fff" />
          <path d="M9 5.500Q10.500 8 9 10.500M11 4Q13.500 8 11 12M13 2.500Q16.500 8 13 13.500" />
        </svg>
        <svg width="16" height="16" viewBox="0 0 16 16" fill="none" stroke="#fff">
          <path d="M5.500 3.500H14.500V11.500H5.500ZM10 12V14M6 14.500H14" strokeWidth="1.500" />
          <path d="M1 2V5H4V2M2.500 5V13H5" />
        </svg>
        <div className="flex flex-col items-center pl-2 text-[13px] leading-[18px] whitespace-nowrap">
          <span>22:37</span>
          <span>2023/6/29</span>
        </div>
        <button aria-label="Show desktop" className="h-[38px] w-3.5 border border-[#5c7c9c] bg-linear-to-br from-[#5c7088] to-[#142c50]" />
      </div>
    </footer>
  );
}

// Desktop icons showing through the glass title bar
const ghosts = [698, 774, 850, 1003, 1156, 1308, 1461, 1538];

function TitleBar() {
  return (
    <div className="relative flex h-[22px] shrink-0 items-start overflow-hidden border-b border-[#b4c4dc] bg-[linear-gradient(90deg,#a8b0c0_0,#8c9cb8_180px,#8494b0_400px,#3c5c8c_440px,#34588c_560px,#0c3470_570px,#0c3470_700px,#1c4478_900px,#18427a_1100px,#0c3470_1180px,#1c4478_1300px,#103870_1500px,#103870_1880px,#2c548c_100%)]">
      <svg className="absolute inset-0 h-full w-full" preserveAspectRatio="xMinYMin slice">
        <g className="blur-[2px]">
          {ghosts.map((x) => (
            <g key={x}>
              <path d={`M${x} 22Q${x} 8 ${x + 22} 7H${x + 36}L${x + 45} 22Z`} fill="#bcdcf4" />
              <path d={`M${x + 2} 22Q${x + 6} 10 ${x + 20} 12L${x + 18} 22Z`} fill="#84b4a8" />
            </g>
          ))}
          <rect x="1080" y="8" width="44" height="18" fill="#b4c4e4" />
          <rect x="1400" y="7" width="26" height="18" fill="#44a8ec" />
          <rect x="1232" y="17" width="44" height="8" fill="#c4d4ec" />
          <rect x="1688" y="10" width="44" height="16" rx="5" fill="#c8283c" />
          <circle cx="467" cy="13" r="5" fill="#9cb4d0" />
          <circle cx="494" cy="10" r="6" fill="#9cb4d0" />
          <circle cx="532" cy="10" r="5" fill="#9cb4d0" />
        </g>
      </svg>
      <h2 className={clsx("relative flex items-center gap-1.5 text-xs leading-[14px] text-black", UI)}>
        <span className="-ml-2 flex h-3.5 items-center">
          <XIcon />
        </span>
        Graphic Editor 9.07b2 (00@HY-HYCAM-PC411 - Windows, pid:7052)
      </h2>
      <div className="relative mr-1.5 ml-auto flex h-3 rounded-b-sm border border-t-0 border-[#7c98bc] bg-[#2c5084]/60">
        <button aria-label="Minimize" className="flex w-7 items-center justify-center border-r border-[#7c98bc]">
          <i className="h-1 w-3 bg-white" />
        </button>
        <button aria-label="Maximize" className="flex w-7 justify-center border-r border-[#7c98bc]">
          <i className="h-2 w-3 border-2 border-t-0 border-white" />
        </button>
        <button aria-label="Close" className="flex w-[47px] justify-center">
          <svg width="12" height="8" viewBox="0 2 12 8">
            <path d="M2 0 L10 9 M10 0 L2 9" stroke="#fff" strokeWidth="2.500" />
          </svg>
        </button>
      </div>
    </div>
  );
}

export default function App() {
  return (
    <div className="relative flex h-screen flex-col overflow-hidden bg-[#0c2c5c]">
      <TitleBar />
      <div className="flex min-h-0 flex-1 flex-col bg-[linear-gradient(180deg,#345c94_0,#0c3470_10%,#8cb0e4_75%,#e4f0fc_84%,#7ca0d8_90%,#103c78_94%)] pr-2 pb-[7px]">
        <MenuBar />
        <div className="flex min-h-0 flex-1 bg-black">
          <Sidebar />
          <Board />
          <Overview />
        </div>
        <CommandBar />
        <div className="h-8 shrink-0 border-t-2 border-t-[#6c8c8c] bg-[#dcffff] pb-1">
          <div className="h-full border-y border-r border-black">
            <div className="h-full border-t-4 border-r-2 border-b-2 border-t-[#e0ffff] border-r-[#5c9494] border-b-[#5c9494] bg-[#b4ffff]" />
          </div>
        </div>
      </div>
      <Taskbar />
      <Popview />
      <ChecklistEditor />
    </div>
  );
}
